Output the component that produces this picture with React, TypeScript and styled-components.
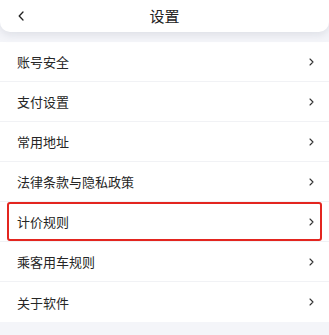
import React from "react";
import styled, { createGlobalStyle } from "styled-components";

const GlobalStyle = createGlobalStyle`
  html, body {
    margin: 0;
    padding: 0;
    background: #f4f5f9;
    font-family: "Noto Sans CJK SC", "Noto Sans", sans-serif;
  }
`;

const Page = styled.div`
  width: 329px;
  height: 335px;
  overflow: hidden;
  background: #f4f5f9;
`;

const Header = styled.header`
  height: 32px;
  background: #fff;
  border-radius: 0 0 10px 10px;
  box-shadow: 0 3px 8px rgba(120, 125, 150, 0.18);
  display: grid;
  grid-template-columns: 40px 1fr 40px;
  align-items: center;
  position: relative;
  z-index: 1;
`;

const BackButton = styled.button`
  border: 0;
  background: none;
  padding: 0 0 0 18px;
  height: 32px;
  display: flex;
  align-items: center;
  color: #222;
`;

const Title = styled.h1`
  margin: 0;
  text-align: center;
  font-size: 15px;
  font-weight: 400;
  color: #222;
  line-height: 32px;
`;

const List = styled.ul`
  list-style: none;
  margin: 10px 0 0;
  padding: 0;
  background: #fff;
`;

const Row = styled.li<{ $last?: boolean }>`
  position: relative;
  height: 40px;
  box-sizing: border-box;
  display: flex;
  align-items: center;
  justify-content: space-between;
  padding: 0 15px 0 17px;
  border-bottom: ${(p) => (p.$last ? "none" : "1px solid #f1f2f5")};
  font-size: 13px;
  color: #262626;
`;

const Highlight = styled.span`
  position: absolute;
  top: 0;
  bottom: 0;
  left: 7px;
  right: 7px;
  border: 2px solid #e3251f;
  border-radius: 3px;
  pointer-events: none;
`;

const Chevron = () => (
  <svg width="5" height="8" viewBox="0 0 5 8">
    <path d="M1 1 L4 4 L1 7" fill="none" stroke="#333" strokeWidth="1.1" strokeLinecap="round" strokeLinejoin="round" />
  </svg>
);

const items = [
  "账号安全",
  "支付设置",
  "常用地址",
  "法律条款与隐私政策",
  "计价规则",
  "乘客用车规则",
  "关于软件",
];

export default function App() {
  return (
    <Page>
      <GlobalStyle />
      <Header>
        <BackButton aria-label="返回">
          <svg width="6" height="10" viewBox="0 0 6 10">
            <path d="M5 1 L1.2 5 L5 9" fill="none" stroke="#222" strokeWidth="1.3" strokeLinecap="round" strokeLinejoin="round" />
          </svg>
        </BackButton>
        <Title>设置</Title>
        <span />
      </Header>
      <List>
        {items.map((label, i) => (
          <Row key={label} $last={i === items.length - 1}>
            <span>{label}</span>
            <Chevron />
            {label === "计价规则" && <Highlight />}
          </Row>
        ))}
      </List>
    </Page>
  );
}
